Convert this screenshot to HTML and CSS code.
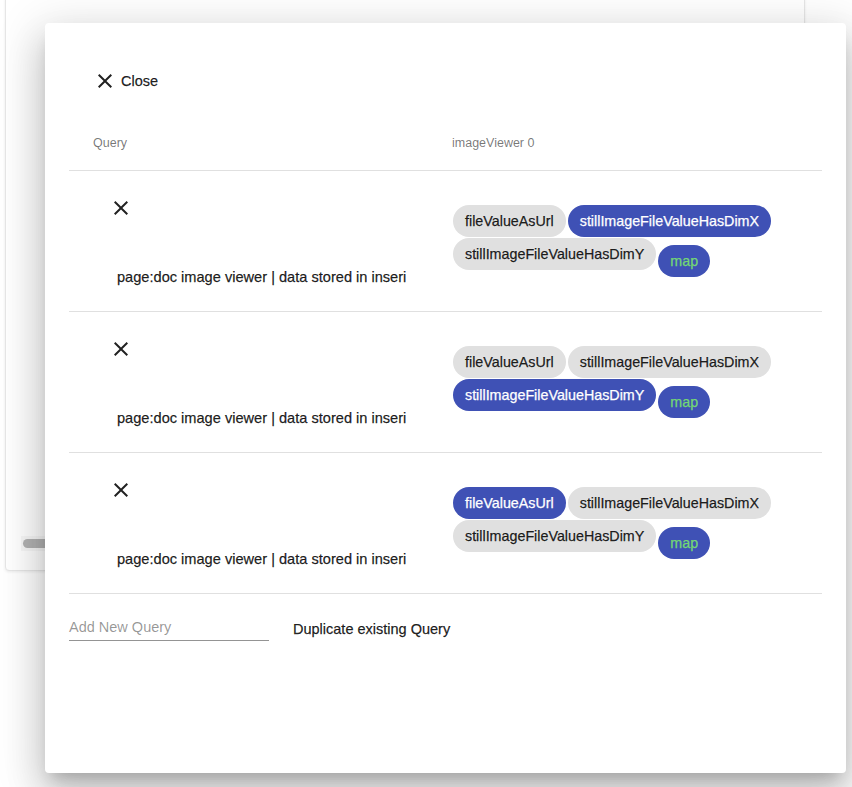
FILE: index.html
```html
<!DOCTYPE html>
<html lang="en">
<head>
<meta charset="utf-8">
<title>Query dialog</title>
<link rel="stylesheet" href="styles.css">
</head>
<body>
<div class="page">
  <div class="bg-card">
    <div class="scroll-track"><div class="scroll-thumb"></div></div>
  </div>
</div>

<div class="dialog">
  <button class="close-btn" type="button">
    <svg class="icon" viewBox="0 0 24 24" width="24" height="24"><path d="M19 6.41L17.59 5 12 10.59 6.41 5 5 6.41 10.59 12 5 17.59 6.41 19 12 13.41 17.59 19 19 17.59 13.41 12z"/></svg>
    <span>Close</span>
  </button>

  <div class="table">
    <div class="row header">
      <div class="cell head-cell first">Query</div>
      <div class="cell head-cell">imageViewer 0</div>
    </div>

    <div class="row">
      <div class="cell query-cell">
        <svg class="icon remove" viewBox="0 0 24 24" width="24" height="24"><path d="M19 6.41L17.59 5 12 10.59 6.41 5 5 6.41 10.59 12 5 17.59 6.41 19 12 13.41 17.59 19 19 17.59 13.41 12z"/></svg>
        <div class="query-name">page:doc image viewer | data stored in inseri</div>
      </div>
      <div class="cell chips">
        <span class="chip">fileValueAsUrl</span>
        <span class="chip selected">stillImageFileValueHasDimX</span>
        <span class="chip">stillImageFileValueHasDimY</span>
        <span class="chip map">map</span>
      </div>
    </div>

    <div class="row">
      <div class="cell query-cell">
        <svg class="icon remove" viewBox="0 0 24 24" width="24" height="24"><path d="M19 6.41L17.59 5 12 10.59 6.41 5 5 6.41 10.59 12 5 17.59 6.41 19 12 13.41 17.59 19 19 17.59 13.41 12z"/></svg>
        <div class="query-name">page:doc image viewer | data stored in inseri</div>
      </div>
      <div class="cell chips">
        <span class="chip">fileValueAsUrl</span>
        <span class="chip">stillImageFileValueHasDimX</span>
        <span class="chip selected">stillImageFileValueHasDimY</span>
        <span class="chip map">map</span>
      </div>
    </div>

    <div class="row">
      <div class="cell query-cell">
        <svg class="icon remove" viewBox="0 0 24 24" width="24" height="24"><path d="M19 6.41L17.59 5 12 10.59 6.41 5 5 6.41 10.59 12 5 17.59 6.41 19 12 13.41 17.59 19 19 17.59 13.41 12z"/></svg>
        <div class="query-name">page:doc image viewer | data stored in inseri</div>
      </div>
      <div class="cell chips">
        <span class="chip selected">fileValueAsUrl</span>
        <span class="chip">stillImageFileValueHasDimX</span>
        <span class="chip">stillImageFileValueHasDimY</span>
        <span class="chip map">map</span>
      </div>
    </div>
  </div>

  <div class="footer">
    <div class="field"><span class="placeholder">Add New Query</span></div>
    <button class="text-btn" type="button">Duplicate existing Query</button>
  </div>
</div>
</body>
</html>
```

FILE: styles.css
```css
* { box-sizing: border-box; }

html, body {
  margin: 0;
  padding: 0;
  background: #ffffff;
  overflow: hidden;
  font-family: "Liberation Sans", Arial, Helvetica, sans-serif;
  color: rgba(0, 0, 0, 0.87);
}

.page {
  width: 852px;
  height: 787px;
  padding-left: 5px;
}

.bg-card {
  width: 800px;
  height: 576px;
  margin-top: -5px;
  background: #ffffff;
  border: 1px solid #e6e6e6;
  border-radius: 4px;
  box-shadow: 0 1px 3px rgba(0, 0, 0, 0.08);
  padding-top: 540px;
  padding-left: 15px;
}

.scroll-track {
  height: 15px;
  width: 780px;
  background: #f7f7f7;
  padding: 3px 2px;
}

.scroll-thumb {
  width: 120px;
  height: 9px;
  border-radius: 5px;
  background: #b3b3b3;
}

.dialog {
  position: absolute;
  left: 45px;
  top: 23px;
  width: 801px;
  height: 750px;
  background: #ffffff;
  border-radius: 4px;
  padding: 24px;
  box-shadow: 0 11px 15px -7px rgba(0, 0, 0, 0.2),
              0 24px 38px 3px rgba(0, 0, 0, 0.14),
              0 9px 46px 8px rgba(0, 0, 0, 0.12);
}

.icon {
  display: block;
  width: 24px;
  height: 24px;
  fill: rgba(0, 0, 0, 0.87);
  flex: none;
}

.close-btn {
  display: flex;
  align-items: center;
  gap: 4px;
  height: 36px;
  margin-top: 16px;
  padding: 0 0 0 24px;
  border: 0;
  background: transparent;
  font-family: inherit;
  font-size: 14.5px;
  color: rgba(0, 0, 0, 0.87);
  -webkit-text-stroke: 0.25px currentColor;
  cursor: pointer;
}

.table {
  margin-top: 15px;
}

.row {
  display: grid;
  grid-template-columns: 383px 1fr;
  height: 141px;
  border-bottom: 1px solid rgba(0, 0, 0, 0.12);
  align-items: center;
}

.row.header {
  height: 57px;
}

.head-cell {
  font-size: 12.5px;
  color: rgba(0, 0, 0, 0.54);
  padding-top: 2px;
}

.head-cell.first {
  padding-left: 24px;
}

.query-cell {
  display: flex;
  flex-direction: column;
  align-items: flex-start;
}

.remove {
  margin-left: 40px;
}

.query-name {
  margin-top: 47px;
  margin-left: 48px;
  font-size: 14.6px;
  line-height: 20px;
  -webkit-text-stroke: 0.25px currentColor;
}

.chips {
  display: flex;
  flex-wrap: wrap;
  align-items: flex-start;
  gap: 1px 2px;
  padding-left: 1px;
}

.chip {
  display: inline-flex;
  align-items: center;
  height: 32px;
  padding: 0 12px;
  border-radius: 16px;
  background: #e0e0e0;
  color: rgba(0, 0, 0, 0.87);
  font-size: 14.3px;
  -webkit-text-stroke: 0.25px currentColor;
  white-space: nowrap;
}

.chip.selected {
  background: #3f51b5;
  color: #ffffff;
}

.chip.map {
  background: #3f51b5;
  color: #74d874;
  margin-top: 7px;
}

.footer {
  display: flex;
  align-items: center;
  padding-top: 17px;
}

.field {
  width: 200px;
  border-bottom: 1px solid rgba(0, 0, 0, 0.42);
  padding-bottom: 4px;
  font-size: 14.5px;
  line-height: 18px;
}

.placeholder {
  color: rgba(0, 0, 0, 0.42);
}

.text-btn {
  margin-left: 8px;
  height: 36px;
  padding: 0 16px;
  border: 0;
  background: transparent;
  font-family: inherit;
  font-size: 14.5px;
  color: rgba(0, 0, 0, 0.87);
  -webkit-text-stroke: 0.25px currentColor;
}
```
